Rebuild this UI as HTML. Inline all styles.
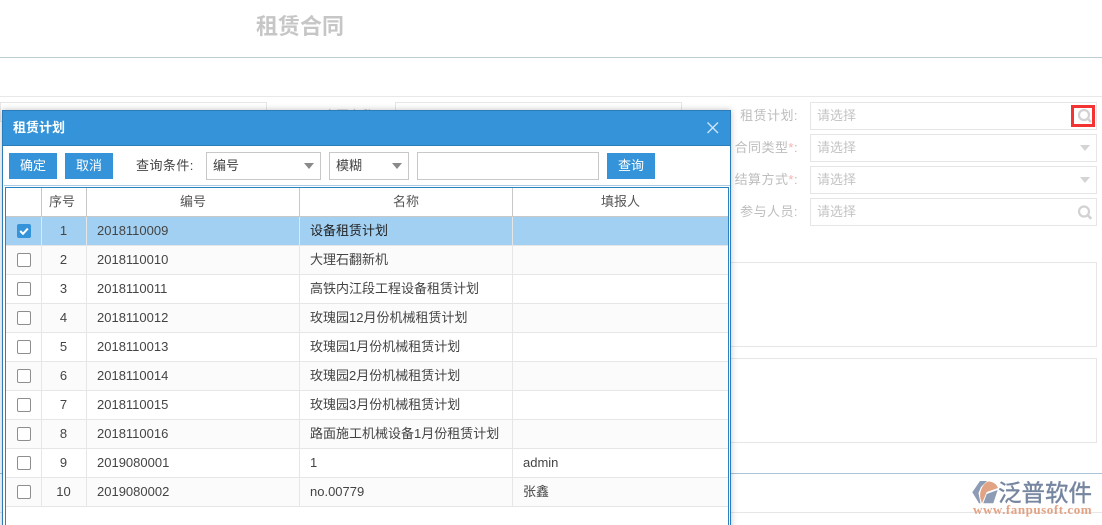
<!DOCTYPE html>
<html lang="zh">
<head>
<meta charset="utf-8">
<style>
html,body{margin:0;padding:0;width:1102px;height:525px;overflow:hidden;background:#fff;}
body{position:relative;font-family:"Liberation Sans","Microsoft YaHei","Noto Sans CJK SC",sans-serif;font-size:13px;color:#444;}
.a{position:absolute;box-sizing:border-box;white-space:nowrap;}
.box{border:1px solid #e6e6e6;background:#fff;}
.lbl{color:#bdbdbd;text-align:right;width:90px;left:708px;line-height:20px;letter-spacing:.45px;}
.lbl i{font-style:normal;color:#f7b0b0;}
.ph{color:#c4c4c4;left:817px;line-height:20px;}
.tri{width:0;height:0;border-left:5px solid transparent;border-right:5px solid transparent;border-top:6px solid #d4d4d4;}
.btn{background:#3594d9;color:#fff;text-align:center;height:26px;line-height:26px;width:48px;top:153px;}
.sel{border:1px solid #c8c8c8;background:#fff;height:28px;top:152px;line-height:26px;padding-left:6px;color:#444;}
.sel b{position:absolute;right:6px;top:10px;width:0;height:0;border-left:5px solid transparent;border-right:5px solid transparent;border-top:6px solid #8a8a8a;}
.hl{background:#e6e6e6;height:1px;}
.vl{background:#e6e6e6;width:1px;}
.cb{width:14px;height:14px;left:17px;border:1px solid #8e8e8e;border-radius:2px;background:#fff;}
.c{line-height:20px;color:#444;}
.n{width:45px;left:41px;text-align:center;}
.id{left:97px;}
.nm{left:310px;}
.hd{line-height:20px;top:192px;text-align:center;color:#555;}
</style>
</head>
<body>
<!-- background page -->
<div class="a" style="left:256px;top:12px;font-size:22px;font-weight:bold;color:#c6c6c6;line-height:30px;">租赁合同</div>
<div class="a" style="left:0;top:57px;width:1102px;height:1px;background:#bccdd5;"></div>
<div class="a" style="left:0;top:96px;width:1102px;height:1px;background:#e8e8e8;"></div>
<div class="a box" style="left:0;top:102px;width:267px;height:20px;"></div>
<div class="a box" style="left:395px;top:102px;width:287px;height:20px;"></div>
<div class="a" style="left:323px;top:105px;color:#c8c8c8;">合同名称</div>

<div class="a lbl" style="top:106px;">租赁计划:</div>
<div class="a lbl" style="top:138px;">合同类型<i>*</i>:</div>
<div class="a lbl" style="top:170px;">结算方式<i>*</i>:</div>
<div class="a lbl" style="top:202px;">参与人员:</div>

<div class="a box" style="left:810px;top:102px;width:287px;height:28px;"></div>
<div class="a box" style="left:810px;top:134px;width:287px;height:28px;"></div>
<div class="a box" style="left:810px;top:166px;width:287px;height:28px;"></div>
<div class="a box" style="left:810px;top:198px;width:287px;height:28px;"></div>
<div class="a ph" style="top:106px;">请选择</div>
<div class="a ph" style="top:138px;">请选择</div>
<div class="a ph" style="top:170px;">请选择</div>
<div class="a ph" style="top:202px;">请选择</div>
<div class="a tri" style="left:1080px;top:145px;"></div>
<div class="a tri" style="left:1080px;top:177px;"></div>
<svg class="a" style="left:1071px;top:105px;" width="24" height="22" viewBox="0 0 24 22">
<rect x="1.500" y="1.500" width="21" height="19" fill="none" stroke="#f43333" stroke-width="3"/>
<circle cx="13" cy="10" r="5" fill="none" stroke="#d2d2d2" stroke-width="2.200"/>
<path d="M16.500 13.500l3.500 3.500" stroke="#d2d2d2" stroke-width="2.600" fill="none"/>
</svg>
<svg class="a" style="left:1071px;top:201px;" width="25" height="22" viewBox="0 0 25 22">
<circle cx="13" cy="10.500" r="5" fill="none" stroke="#d2d2d2" stroke-width="2.200"/>
<path d="M16.500 14l3.800 3.800" stroke="#d2d2d2" stroke-width="2.600" fill="none"/>
</svg>

<div class="a box" style="left:700px;top:262px;width:397px;height:85px;"></div>
<div class="a box" style="left:700px;top:358px;width:397px;height:85px;"></div>
<div class="a" style="left:0;top:473px;width:1102px;height:1px;background:#aac3d6;"></div>
<div class="a" style="left:0;top:512px;width:1102px;height:1px;background:#e6e6e6;"></div>

<!-- logo -->
<svg class="a" style="left:971px;top:479px;" width="28" height="26" viewBox="0 0 28 26">
<path d="M1.300 13.300L9 2h7l-6 6-2.500 6 2 10.300H8z" fill="#8d9cb4"/>
<path d="M17 2.500c5 0 8.500 2.500 10 6.500l-11.300 4-4.700 11.300c-2-5-2.500-9.300-1-13 1.300-4 4-7.500 7-8.800z" fill="#e2a284"/>
<path d="M15.700 15l11-4-4.400 13.300H12.300z" fill="#8d9cb4"/>
</svg>
<div class="a" style="left:998px;top:478px;font-size:23.500px;line-height:30px;color:#7686a0;-webkit-text-stroke:.4px #7686a0;">泛普软件</div>
<div class="a" style="left:973px;top:503px;font-family:'Liberation Serif',serif;font-size:13px;font-weight:bold;line-height:14px;color:#e2a284;letter-spacing:.55px;">www.fanpusoft.com</div>

<!-- dialog -->
<div class="a" style="left:2px;top:110px;width:729px;height:430px;background:#fff;border:1px solid #2b7cb8;box-shadow:0 0 6px rgba(0,0,0,.25);"></div>
<div class="a" style="left:3px;top:111px;width:727px;height:35px;background:#3594d9;border-bottom:1px solid #2b7cb8;"></div>
<div class="a" style="left:13px;top:118px;color:#fff;font-weight:bold;line-height:20px;">租赁计划</div>
<svg class="a" style="left:706px;top:121px;" width="14" height="14" viewBox="0 0 14 14"><path d="M1.500 1.500l10.500 10.500M12 1.500L1.500 12" stroke="#cfe5f6" stroke-width="1.400" fill="none"/></svg>

<div class="a btn" style="left:9px;">确定</div>
<div class="a btn" style="left:65px;">取消</div>
<div class="a" style="left:136px;top:156px;line-height:20px;color:#444;letter-spacing:.45px;">查询条件:</div>
<div class="a sel" style="left:206px;width:115px;">编号<b></b></div>
<div class="a sel" style="left:329px;width:80px;">模糊<b></b></div>
<div class="a sel" style="left:417px;width:182px;"></div>
<div class="a btn" style="left:607px;">查询</div>

<div class="a" style="left:4px;top:185px;width:726px;height:1px;background:#a9cbe4;"></div>
<!-- table frame -->
<div class="a" style="left:5px;top:187px;width:724px;height:340px;border:1px solid #2b82c0;border-bottom:none;"></div>
<div class="a" style="left:6px;top:216px;width:722px;height:1px;background:#c8c8c8;"></div>

<!-- row backgrounds -->
<div class="a" style="left:6px;top:217px;width:722px;height:28px;background:#a2d0f2;"></div>
<div class="a" style="left:6px;top:246px;width:722px;height:28px;background:#fbfbfb;"></div>
<div class="a" style="left:6px;top:304px;width:722px;height:28px;background:#fbfbfb;"></div>
<div class="a" style="left:6px;top:362px;width:722px;height:28px;background:#fbfbfb;"></div>
<div class="a" style="left:6px;top:420px;width:722px;height:28px;background:#fbfbfb;"></div>
<div class="a" style="left:6px;top:478px;width:722px;height:28px;background:#fbfbfb;"></div>

<!-- row lines -->
<div class="a hl" style="left:6px;top:245px;width:722px;"></div>
<div class="a hl" style="left:6px;top:274px;width:722px;"></div>
<div class="a hl" style="left:6px;top:303px;width:722px;"></div>
<div class="a hl" style="left:6px;top:332px;width:722px;"></div>
<div class="a hl" style="left:6px;top:361px;width:722px;"></div>
<div class="a hl" style="left:6px;top:390px;width:722px;"></div>
<div class="a hl" style="left:6px;top:419px;width:722px;"></div>
<div class="a hl" style="left:6px;top:448px;width:722px;"></div>
<div class="a hl" style="left:6px;top:477px;width:722px;"></div>
<div class="a hl" style="left:6px;top:506px;width:722px;"></div>

<!-- column lines -->
<div class="a" style="left:41px;top:188px;width:1px;height:28px;background:#c8c8c8;"></div>
<div class="a" style="left:86px;top:188px;width:1px;height:28px;background:#c8c8c8;"></div>
<div class="a" style="left:299px;top:188px;width:1px;height:28px;background:#c8c8c8;"></div>
<div class="a" style="left:512px;top:188px;width:1px;height:28px;background:#c8c8c8;"></div>
<div class="a vl" style="left:41px;top:217px;height:290px;"></div>
<div class="a vl" style="left:86px;top:217px;height:290px;"></div>
<div class="a vl" style="left:299px;top:217px;height:290px;"></div>
<div class="a vl" style="left:512px;top:217px;height:290px;"></div>

<!-- header -->
<div class="a hd" style="left:40px;width:44px;">序号</div>
<div class="a hd" style="left:87px;width:212px;">编号</div>
<div class="a hd" style="left:300px;width:212px;">名称</div>
<div class="a hd" style="left:513px;width:215px;">填报人</div>

<!-- checkboxes -->
<svg class="a" style="left:17px;top:224px;" width="14" height="14" viewBox="0 0 14 14"><rect width="14" height="14" rx="2" fill="#3594d9"/><path d="M3.200 7l2.800 2.800 4.800-5.200" stroke="#fff" stroke-width="2" fill="none"/></svg>
<div class="a cb" style="top:253px;"></div>
<div class="a cb" style="top:282px;"></div>
<div class="a cb" style="top:311px;"></div>
<div class="a cb" style="top:340px;"></div>
<div class="a cb" style="top:369px;"></div>
<div class="a cb" style="top:398px;"></div>
<div class="a cb" style="top:427px;"></div>
<div class="a cb" style="top:456px;"></div>
<div class="a cb" style="top:485px;"></div>

<!-- rows -->
<div class="a c n" style="top:221px;">1</div><div class="a c id" style="top:221px;">2018110009</div><div class="a c nm" style="top:221px;color:#222;">设备租赁计划</div>
<div class="a c n" style="top:250px;">2</div><div class="a c id" style="top:250px;">2018110010</div><div class="a c nm" style="top:250px;">大理石翻新机</div>
<div class="a c n" style="top:279px;">3</div><div class="a c id" style="top:279px;">2018110011</div><div class="a c nm" style="top:279px;">高铁内江段工程设备租赁计划</div>
<div class="a c n" style="top:308px;">4</div><div class="a c id" style="top:308px;">2018110012</div><div class="a c nm" style="top:308px;">玫瑰园12月份机械租赁计划</div>
<div class="a c n" style="top:337px;">5</div><div class="a c id" style="top:337px;">2018110013</div><div class="a c nm" style="top:337px;">玫瑰园1月份机械租赁计划</div>
<div class="a c n" style="top:366px;">6</div><div class="a c id" style="top:366px;">2018110014</div><div class="a c nm" style="top:366px;">玫瑰园2月份机械租赁计划</div>
<div class="a c n" style="top:395px;">7</div><div class="a c id" style="top:395px;">2018110015</div><div class="a c nm" style="top:395px;">玫瑰园3月份机械租赁计划</div>
<div class="a c n" style="top:424px;">8</div><div class="a c id" style="top:424px;">2018110016</div><div class="a c nm" style="top:424px;">路面施工机械设备1月份租赁计划</div>
<div class="a c n" style="top:453px;">9</div><div class="a c id" style="top:453px;">2019080001</div><div class="a c nm" style="top:453px;">1</div><div class="a c" style="left:523px;top:453px;">admin</div>
<div class="a c n" style="top:482px;">10</div><div class="a c id" style="top:482px;">2019080002</div><div class="a c nm" style="top:482px;">no.00779</div><div class="a c" style="left:523px;top:482px;">张鑫</div>
</body>
</html>
